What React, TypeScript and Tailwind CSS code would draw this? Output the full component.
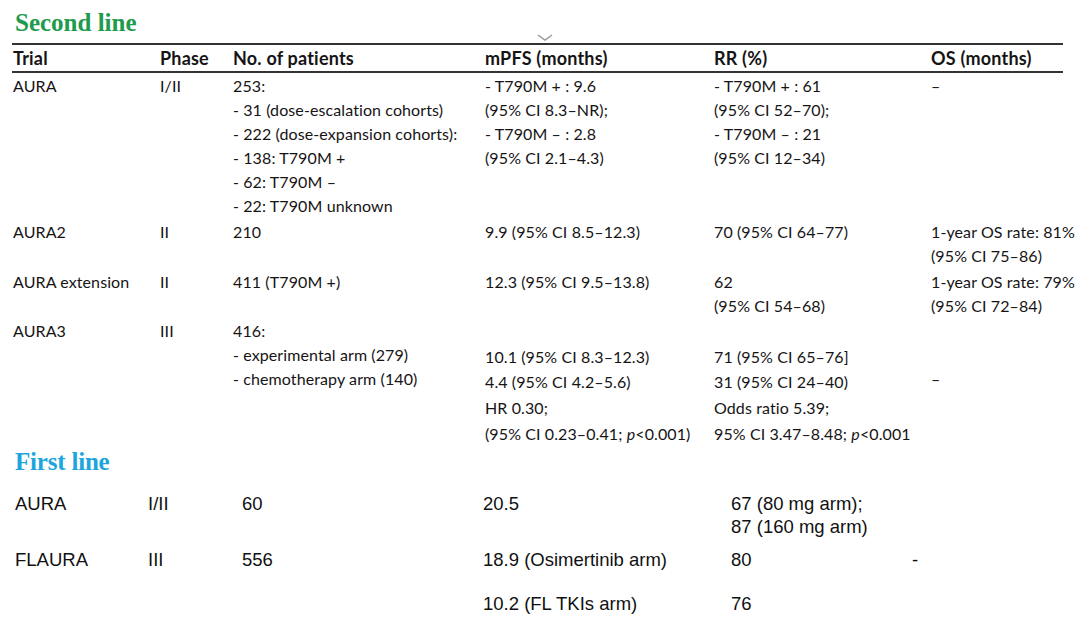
import React from "react";

type Row = {
  trial: string;
  phase: string;
  patients: React.ReactNode[];
  mpfs: React.ReactNode[];
  rr: React.ReactNode[];
  os: React.ReactNode[];
  h: string;
};

const secondLine: Row[] = [
  {
    trial: "AURA",
    phase: "I/II",
    patients: [
      "253:",
      "- 31 (dose-escalation cohorts)",
      "- 222 (dose-expansion cohorts):",
      "- 138: T790M +",
      "- 62: T790M –",
      "- 22: T790M unknown",
    ],
    mpfs: ["- T790M + : 9.6", "(95% CI 8.3–NR);", "- T790M – : 2.8", "(95% CI 2.1–4.3)"],
    rr: ["- T790M + : 61", "(95% CI 52–70);", "- T790M – : 21", "(95% CI 12–34)"],
    os: ["–"],
    h: "h-[146px]",
  },
  {
    trial: "AURA2",
    phase: "II",
    patients: ["210"],
    mpfs: ["9.9 (95% CI 8.5–12.3)"],
    rr: ["70 (95% CI 64–77)"],
    os: ["1-year OS rate: 81%", "(95% CI 75–86)"],
    h: "h-[50px]",
  },
  {
    trial: "AURA extension",
    phase: "II",
    patients: ["411 (T790M +)"],
    mpfs: ["12.3 (95% CI 9.5–13.8)"],
    rr: ["62", "(95% CI 54–68)"],
    os: ["1-year OS rate: 79%", "(95% CI 72–84)"],
    h: "h-[49px]",
  },
];

const Lines = ({ items }: { items: React.ReactNode[] }) => (
  <div className="flex flex-col">
    {items.map((t, i) => (
      <div key={i} className="h-[24px] leading-[24px] whitespace-nowrap">
        {t}
      </div>
    ))}
  </div>
);

const cols = "grid grid-cols-[147px_73px_252px_229px_217px_1fr]";
const lower = "grid grid-cols-[133px_94px_241px_248px_181px_1fr]";

export default function App() {
  return (
    <div className="w-[1080px] h-[632px] bg-white overflow-hidden relative text-[#161415]">
      {/* heading */}
      <div
        className="pl-[15px] pt-[8px] h-[43px] text-[25px] font-bold leading-[30px] text-[#1e9b4b]"
        style={{ fontFamily: '"Liberation Serif", "DejaVu Serif", serif' }}
      >
        Second line
      </div>
      <svg className="absolute left-[537px] top-[34px]" width="16" height="8" viewBox="0 0 16 8">
        <path d="M1 1 L8 6 L15 1" stroke="#9a9a9a" strokeWidth="1.5" fill="none" />
      </svg>

      <div
        className="ml-[12px] w-[1051px] text-[16px] tracking-[0.1px]"
        style={{ fontFamily: 'Lato, "Open Sans", sans-serif' }}
      >
        <div className={`${cols} h-[30px] items-center border-t-2 border-b-2 border-[#333] pl-[1px] text-[18px] font-bold tracking-[0.2px]`}>
          <div>Trial</div>
          <div>Phase</div>
          <div>No. of patients</div>
          <div>mPFS (months)</div>
          <div>RR (%)</div>
          <div>OS (months)</div>
        </div>

        <div className="pt-[1px]">
          {secondLine.map((r) => (
            <div key={r.trial} className={`${cols} ${r.h} pl-[1px]`}>
              <Lines items={[r.trial]} />
              <Lines items={[r.phase]} />
              <Lines items={r.patients} />
              <Lines items={r.mpfs} />
              <Lines items={r.rr} />
              <Lines items={r.os} />
            </div>
          ))}

          <div className={`${cols} h-[128px] pl-[1px]`}>
            <Lines items={["AURA3"]} />
            <Lines items={["III"]} />
            <Lines items={["416:", "- experimental arm (279)", "- chemotherapy arm (140)"]} />
            <div className="pt-[25px] flex flex-col whitespace-nowrap">
              <div className="h-[25px] leading-[25px]">10.1 (95% CI 8.3–12.3)</div>
              <div className="h-[26px] leading-[26px]">4.4 (95% CI 4.2–5.6)</div>
              <div className="h-[26px] leading-[26px]">HR 0.30;</div>
              <div className="h-[26px] leading-[26px]">
                (95% CI 0.23–0.41; <i>p</i>&lt;0.001)
              </div>
            </div>
            <div className="pt-[25px] flex flex-col whitespace-nowrap">
              <div className="h-[25px] leading-[25px]">71 (95% CI 65–76]</div>
              <div className="h-[26px] leading-[26px]">31 (95% CI 24–40)</div>
              <div className="h-[26px] leading-[26px]">Odds ratio 5.39;</div>
              <div className="h-[26px] leading-[26px]">
                95% CI 3.47–8.48; <i>p</i>&lt;0.001
              </div>
            </div>
            <div className="pt-[48px] leading-[24px]">–</div>
          </div>
        </div>
      </div>

      {/* first line */}
      <div
        className="pl-[15px] pt-[1px] h-[28px] text-[25px] font-bold leading-[28px] tracking-[-0.2px] text-[#1ca6dc]"
        style={{ fontFamily: '"Liberation Serif", "DejaVu Serif", serif' }}
      >
        First line
      </div>

      <div
        className="pl-[15px] pt-[17px] text-[18.5px] text-[#111]"
        style={{ fontFamily: '"Liberation Sans", Arial, sans-serif' }}
      >
        <div className={`${lower} h-[56px] leading-[23px]`}>
          <div>AURA</div>
          <div>I/II</div>
          <div>60</div>
          <div>20.5</div>
          <div className="whitespace-nowrap">
            <div>67 (80 mg arm);</div>
            <div>87 (160 mg arm)</div>
          </div>
          <div />
        </div>
        <div className={`${lower} h-[44px] leading-[23px]`}>
          <div>FLAURA</div>
          <div>III</div>
          <div>556</div>
          <div className="whitespace-nowrap">18.9 (Osimertinib arm)</div>
          <div>80</div>
          <div>-</div>
        </div>
        <div className={`${lower} leading-[23px]`}>
          <div />
          <div />
          <div />
          <div className="whitespace-nowrap">10.2 (FL TKIs arm)</div>
          <div>76</div>
          <div />
        </div>
      </div>
    </div>
  );
}
